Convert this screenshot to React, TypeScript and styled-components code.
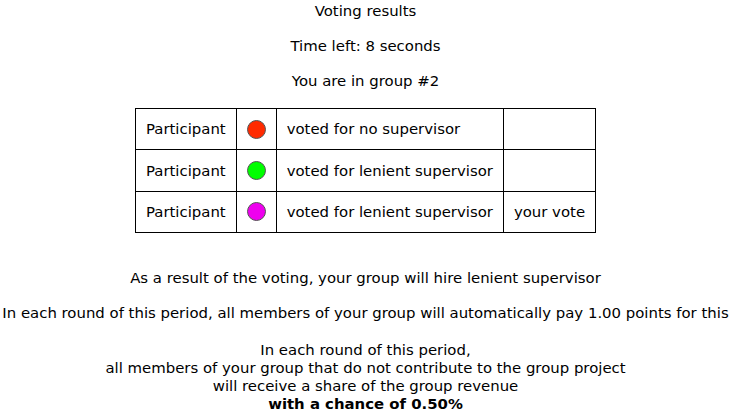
import React from "react";
import styled, { createGlobalStyle } from "styled-components";

const Global = createGlobalStyle`
  html, body { margin: 0; padding: 0; background: #fff; }
  body { font-family: "DejaVu Sans", Verdana, sans-serif; font-size: 14.9px; color: #000; }
`;

const Page = styled.div`
  display: flex;
  flex-direction: column;
  align-items: center;
  text-align: center;
  padding: 2px 6px 0 0;
`;

const Line = styled.p<{ $gap?: number }>`
  margin: 0 0 ${(p) => p.$gap ?? 17}px;
  line-height: 18px;
  white-space: nowrap;
`;

const Table = styled.table`
  border-collapse: collapse;
  margin: 1px 0 36px;
`;

const Cell = styled.td`
  border: 1px solid #000;
  height: 40.4px;
  padding: 0 10px;
  text-align: left;
  line-height: 18px;
  white-space: nowrap;
`;

const Dot = styled.span<{ $color: string }>`
  display: block;
  width: 17px;
  height: 17px;
  border-radius: 50%;
  background: ${(p) => p.$color};
  border: 1px solid #555;
`;

const Block = styled.div`
  line-height: 18px;
  margin-top: 2px;
`;

const Strong = styled.div`
  font-weight: bold;
`;

const rows = [
  { color: "#ff2a00", text: "voted for no supervisor", note: "" },
  { color: "#00ff00", text: "voted for lenient supervisor", note: "" },
  { color: "#ee00ee", text: "voted for lenient supervisor", note: "your vote" },
];

export default function App() {
  return (
    <>
      <Global />
      <Page>
        <Line>Voting results</Line>
        <Line>Time left: 8 seconds</Line>
        <Line>You are in group #2</Line>
        <Table>
          <tbody>
            {rows.map((r, i) => (
              <tr key={i}>
                <Cell>Participant</Cell>
                <Cell>
                  <Dot $color={r.color} />
                </Cell>
                <Cell>{r.text}</Cell>
                <Cell>{r.note}</Cell>
              </tr>
            ))}
          </tbody>
        </Table>
        <Line>As a result of the voting, your group will hire lenient supervisor</Line>
        <Line>In each round of this period, all members of your group will automatically pay 1.00 points for this</Line>
        <Block>
          <div>In each round of this period,</div>
          <div>all members of your group that do not contribute to the group project</div>
          <div>will receive a share of the group revenue</div>
          <Strong>with a chance of 0.50%</Strong>
        </Block>
      </Page>
    </>
  );
}
